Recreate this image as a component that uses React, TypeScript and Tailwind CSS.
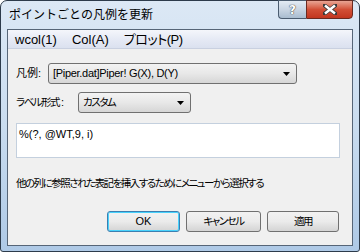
import React from "react";

const jp = "[font-family:'Liberation_Sans','Noto_Sans_CJK_JP',sans-serif]";
const narrow = "text-[10.5px] tracking-[-1.5px] [font-feature-settings:'palt'] whitespace-nowrap";

function Combo({ w, text, kana }: { w: string; text: string; kana?: boolean }) {
  return (
    <div
      className={`${w} shrink-0 h-[21px] flex items-center justify-between rounded-[3px] border border-[#707070] bg-gradient-to-b from-[#f3f3f3] via-[#e8e8e8] to-[#d6d6d6] pl-[4px] pr-[6px] text-black`}
    >
      <span
        className={`leading-none whitespace-nowrap ${
          kana ? narrow : "text-[11px] tracking-[-0.3px]"
        }`}
      >
        {text}
      </span>
      <svg width="7" height="4" viewBox="0 0 7 4">
        <path d="M0 0H7L3.5 4Z" fill="#000" />
      </svg>
    </div>
  );
}

function Btn({ w, label, focus, latin }: { w: string; label: string; focus?: boolean; latin?: boolean }) {
  return (
    <div
      className={`${w} shrink-0 h-[21px] flex items-center justify-center rounded-[3px] border ${
        focus ? "border-[#3c7fb1] shadow-[inset_0_0_0_1px_#48d2fc]" : "border-[#707070]"
      } bg-gradient-to-b from-[#f2f2f2] via-[#ebebeb] to-[#d4d4d4] text-black`}
    >
      <span className={latin ? "text-[11px]" : narrow}>{label}</span>
    </div>
  );
}

export default function App() {
  return (
    <div
      className={`w-[360px] h-[252px] ${jp} rounded-t-[7px] rounded-b-[3px] border border-[#2d3b4b] bg-gradient-to-b from-[#dce8f5] via-[#c9dcef] to-[#aec9e6] flex flex-col pl-[6px] pr-[6px] pb-[5px]`}
    >
      {/* title bar */}
      <div className="h-[28px] flex items-start justify-between">
        <div className="pl-[2px] pt-[6px] text-[12px] leading-[16px] text-black">
          ポイントごとの凡例を更新
        </div>
        <div className="flex -mt-[1px]">
          <div className="w-[28px] h-[19px] flex items-center justify-center rounded-bl-[4px] border border-[#4b5c70] border-r-0 bg-gradient-to-b from-[#e3ebf4] via-[#c9d5e3] to-[#a9bccf]">
            <span className="text-[12px] font-bold text-white leading-none [text-shadow:0_0_1px_#333,0_0_1px_#333] [font-family:'DejaVu_Sans',sans-serif]">?</span>
          </div>
          <div className="w-[47px] h-[19px] flex items-center justify-center rounded-br-[4px] border border-[#6b2a20] bg-gradient-to-b from-[#e8a493] via-[#d24f36] to-[#c2361f]">
            <svg width="14" height="11" viewBox="0 0 14 11">
              <path d="M1 1L13 10M13 1L1 10" stroke="#3a3a3a" strokeWidth="4" strokeLinecap="square" />
              <path d="M2 1.5L12 9.5M12 1.5L2 9.5" stroke="#fff" strokeWidth="2.4" />
            </svg>
          </div>
        </div>
      </div>

      {/* client */}
      <div className="flex-1 border border-[#566577] bg-[#f0f0f0] flex flex-col">
        {/* menu bar */}
        <div className="h-[19px] flex items-center gap-[15px] pl-[7px] bg-gradient-to-b from-[#f4f6fb] via-[#e6eaf5] to-[#dbe1ef] border-b border-[#c9d0e0] text-[13px] leading-none text-black">
          <span>wcol(1)</span>
          <span>Col(A)</span>
          <span className="[font-feature-settings:'palt'] tracking-[-0.5px]">プロット(P)</span>
        </div>

        <div className="flex flex-col pl-[8px] pr-[13px]">
          <div className="flex items-center mt-[14px]">
            <span className="w-[32px] shrink-0 text-[11px] leading-none">凡例:</span>
            <Combo w="w-[249px]" text="[Piper.dat]Piper! G(X), D(Y)" />
          </div>
          <div className="flex items-center mt-[8px]">
            <span className="w-[62px] shrink-0 leading-none flex items-center">
              <span className={narrow}>ラベル形式</span>
              <span className="text-[11px] ml-[2px]">:</span>
            </span>
            <Combo w="w-[113px]" text="カスタム" kana />
          </div>
          <div className="mt-[10px] w-[324px] h-[35px] bg-white border border-[#c4d0de] pl-[2px] pt-[3px] text-[11px] leading-[14px] text-black">
            %(?, @WT,9, i)
          </div>
          <div className={`mt-[18px] leading-[14px] text-black ${narrow}`}>
            他の列に参照された表記を挿入するためにメニューから選択する
          </div>
          <div className="mt-[21px] flex justify-end gap-[6px]">
            <Btn w="w-[73px]" label="OK" focus latin />
            <Btn w="w-[75px]" label="キャンセル" />
            <Btn w="w-[72px]" label="適用" />
          </div>
        </div>
      </div>
    </div>
  );
}
